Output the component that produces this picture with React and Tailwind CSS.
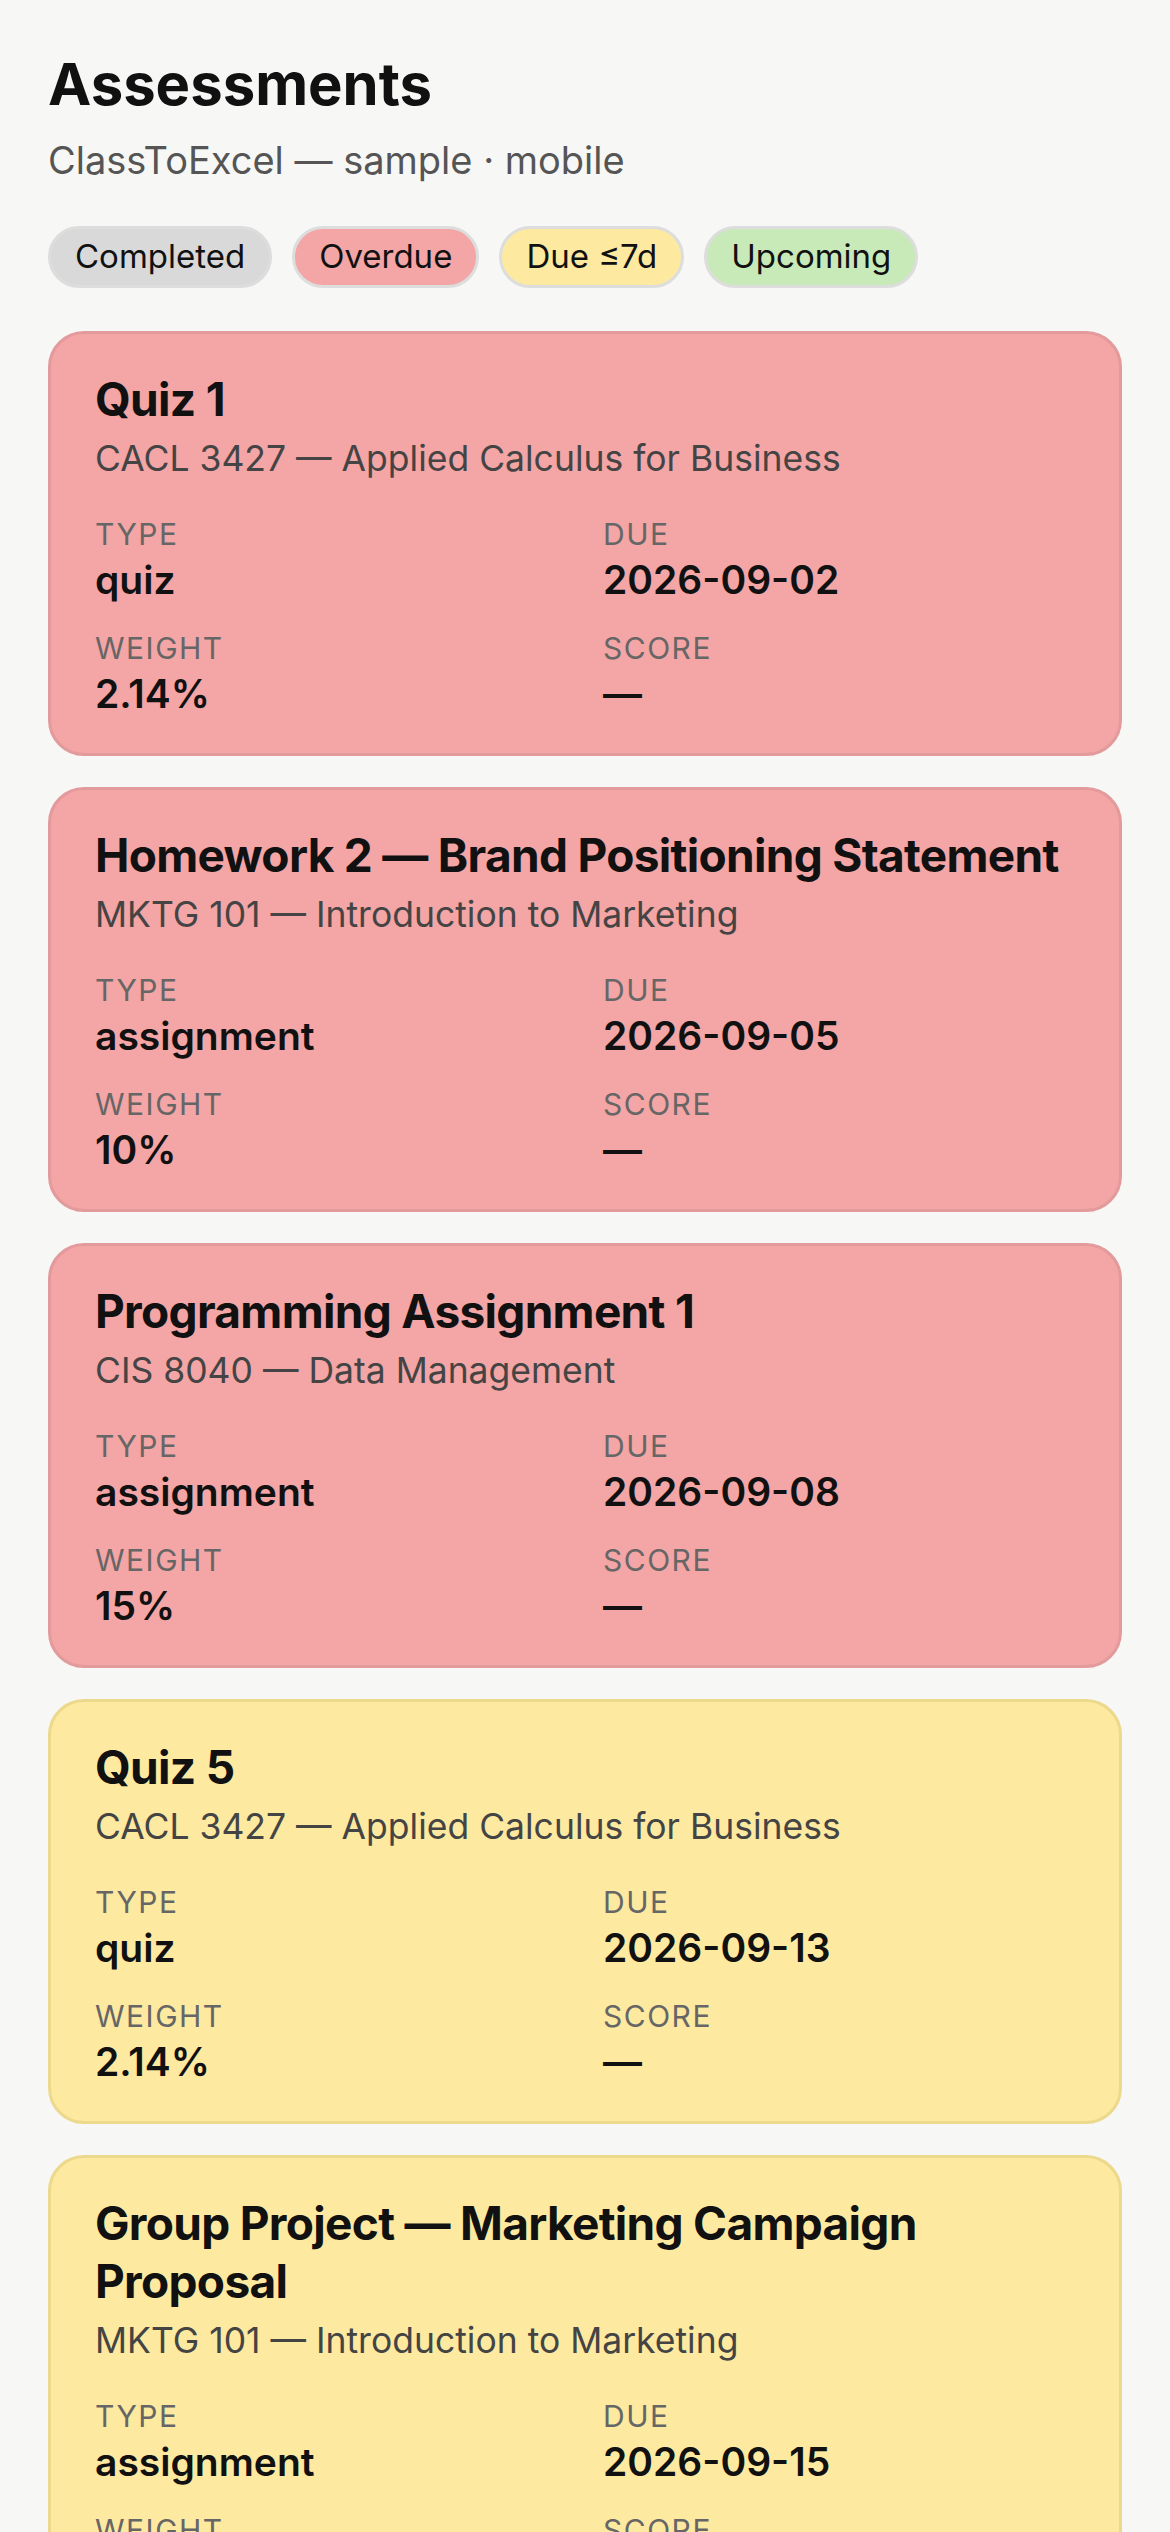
import React from "react";

const cards = [
  { title: "Quiz 1", course: "CACL 3427 — Applied Calculus for Business", type: "quiz", due: "2026-09-02", weight: "2.14%", score: "—", tone: "red" },
  { title: "Homework 2 — Brand Positioning Statement", course: "MKTG 101 — Introduction to Marketing", type: "assignment", due: "2026-09-05", weight: "10%", score: "—", tone: "red" },
  { title: "Programming Assignment 1", course: "CIS 8040 — Data Management", type: "assignment", due: "2026-09-08", weight: "15%", score: "—", tone: "red" },
  { title: "Quiz 5", course: "CACL 3427 — Applied Calculus for Business", type: "quiz", due: "2026-09-13", weight: "2.14%", score: "—", tone: "yellow" },
  { title: "Group Project — Marketing Campaign Proposal", course: "MKTG 101 — Introduction to Marketing", type: "assignment", due: "2026-09-15", weight: "20%", score: "—", tone: "yellow" },
];

function Field({ label, value }) {
  return (
    <div className="flex flex-col">
      <div className="text-[30px] leading-[36px] tracking-[0.05em] uppercase text-[#666]">{label}</div>
      <div className="mt-[4px] text-[39px] leading-[48px] font-semibold text-[#111]">{value}</div>
    </div>
  );
}

function Card({ c }) {
  const tone =
    c.tone === "red"
      ? "bg-[#f4a5a5] border-[#e39a9c]"
      : "bg-[#fde9a0] border-[#ecd98c]";
  return (
    <div className={`rounded-[36px] border-[3px] px-[44px] pt-[36px] pb-[35px] ${tone}`}>
      <div className="text-[46px] leading-[58px] tracking-[-0.015em] font-bold text-[#111]">{c.title}</div>
      <div className="mt-[10px] text-[35.5px] leading-[42px] text-[#444]">{c.course}</div>
      <div className="mt-[36px] grid grid-cols-2 gap-x-[36px] gap-y-[26px]">
        <Field label="Type" value={c.type} />
        <Field label="Due" value={c.due} />
        <Field label="Weight" value={c.weight} />
        <Field label="Score" value={c.score} />
      </div>
    </div>
  );
}

export default function App() {
  return (
    <div className="min-h-screen bg-[#f7f7f5] font-['Inter',sans-serif] text-[#111]">
      <div className="px-[48px] pt-[48px] pb-[48px]">
        <h1 className="text-[58px] leading-[72px] font-bold">Assessments</h1>
        <p className="mt-[16px] text-[38px] leading-[48px] text-[#555]">ClassToExcel — sample · mobile</p>
        <div className="mt-[42px] flex gap-[20px]">
          <span className="h-[62px] px-[24px] flex items-center rounded-full border-[3px] border-[#dddddd] bg-[#d9d9d9] text-[33px]">Completed</span>
          <span className="h-[62px] px-[24px] flex items-center rounded-full border-[3px] border-[#dddddd] bg-[#f4a5a5] text-[33px]">Overdue</span>
          <span className="h-[62px] px-[24px] flex items-center rounded-full border-[3px] border-[#dddddd] bg-[#fde9a0] text-[33px]">Due ≤7d</span>
          <span className="h-[62px] px-[24px] flex items-center rounded-full border-[3px] border-[#dddddd] bg-[#c8e9b8] text-[33px]">Upcoming</span>
        </div>
        <div className="mt-[43px] flex flex-col gap-[31px]">
          {cards.map((c, i) => (
            <Card key={i} c={c} />
          ))}
        </div>
      </div>
    </div>
  );
}
